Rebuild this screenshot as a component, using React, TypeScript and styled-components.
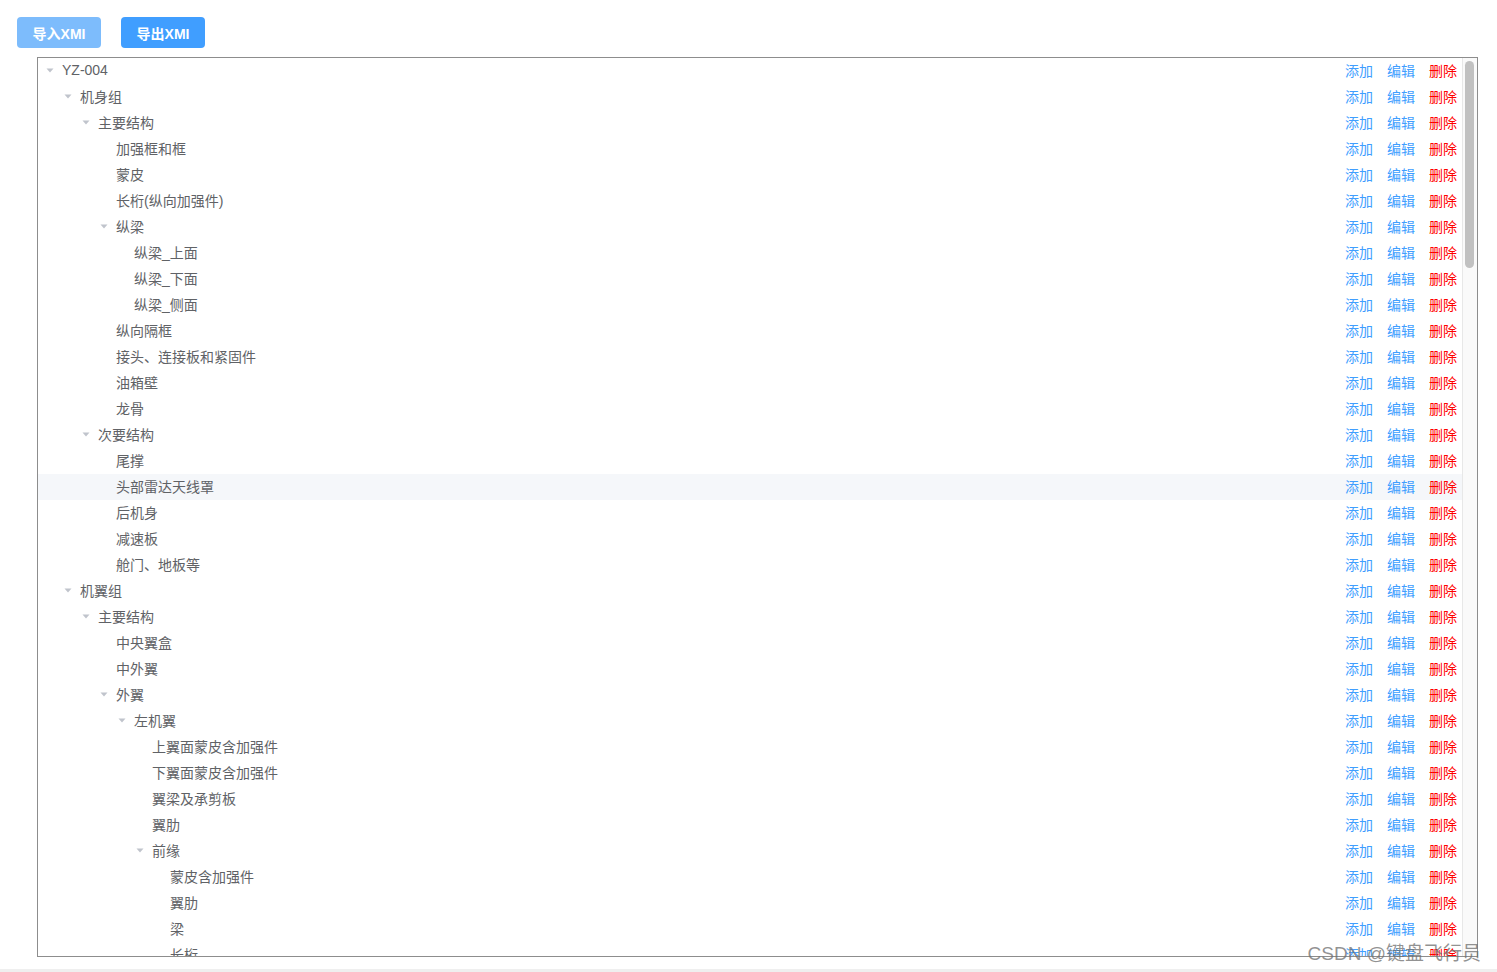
import styled, { createGlobalStyle } from 'styled-components';

interface TreeNode {
  label: string;
  children?: TreeNode[];
}

interface FlatRow {
  label: string;
  level: number;
  hasChildren: boolean;
}

const GlobalStyle = createGlobalStyle`
  html, body {
    margin: 0;
    padding: 0;
    background: #ffffff;
  }
  body {
    font-family: "Liberation Sans", "Noto Sans CJK SC", sans-serif;
    -webkit-font-smoothing: antialiased;
  }
`;

const Page = styled.div`
  position: relative;
  display: flex;
  flex-direction: column;
  width: 1497px;
  height: 972px;
  overflow: hidden;
`;

const Toolbar = styled.div`
  display: flex;
  column-gap: 20px;
  padding: 17px 0 0 17px;
`;

const ToolButton = styled.button<{ $light?: boolean }>`
  width: 84px;
  height: 31px;
  padding: 0;
  border: none;
  border-radius: 4px;
  font-family: "Liberation Sans", "Noto Sans CJK SC", sans-serif;
  font-size: 14px;
  font-weight: 600;
  color: #ffffff;
  background-color: ${(props) => (props.$light ? '#7dbcfc' : '#409eff')};
  cursor: pointer;
`;

const TreePanel = styled.div`
  display: flex;
  box-sizing: border-box;
  height: 900px;
  margin: 9px 19px 0 37px;
  border: 1px solid #8d8d8d;
`;

const ScrollArea = styled.div`
  flex: 1;
  overflow-y: auto;
  overflow-x: hidden;
  scrollbar-width: none;

  &::-webkit-scrollbar {
    display: none;
  }
`;

const ScrollTrack = styled.div`
  display: flex;
  flex-direction: column;
  box-sizing: border-box;
  width: 15px;
  flex-shrink: 0;
  padding: 3px 3px 0 2px;
  background: #fafafa;
  border-left: 1px solid #e8e8e8;
`;

const ScrollThumb = styled.div`
  width: 9px;
  border-radius: 5px;
  background-color: #c1c1c1;
`;

const Row = styled.div<{ $level: number; $active?: boolean }>`
  display: flex;
  align-items: center;
  box-sizing: border-box;
  height: 26px;
  padding: 0 5px 2px ${(props) => props.$level * 18}px;
  background-color: ${(props) => (props.$active ? '#f5f7fa' : 'transparent')};
`;

const ExpandIcon = styled.span`
  display: flex;
  justify-content: center;
  align-items: center;
  width: 24px;
  height: 24px;
  flex-shrink: 0;
`;

const Label = styled.span`
  flex: 1;
  font-size: 14px;
  color: #606266;
  white-space: nowrap;
`;

const Actions = styled.div`
  display: flex;
  align-items: center;
  column-gap: 14px;
`;

const ActionLink = styled.a<{ $danger?: boolean }>`
  font-size: 14px;
  color: ${(props) => (props.$danger ? '#ff0000' : '#409eff')};
  text-decoration: none;
  cursor: pointer;
`;

const BottomBar = styled.div`
  height: 3px;
  margin-top: auto;
  background-color: #efefef;
`;

const Watermark = styled.div`
  position: absolute;
  right: 16px;
  bottom: 6px;
  font-family: "Liberation Sans", "Noto Sans CJK SC", sans-serif;
  font-size: 19px;
  line-height: 24px;
  color: rgba(110, 110, 110, 0.75);
  pointer-events: none;
`;

const n = (label: string, children?: TreeNode[]): TreeNode => ({ label, children });
const leaves = (...labels: string[]) => labels.map((l) => n(l));

// 左右机翼结构相同
const wing = (name: string) =>
  n(name, [
    ...leaves('上翼面蒙皮含加强件', '下翼面蒙皮含加强件', '翼梁及承剪板', '翼肋'),
    n('前缘', leaves('蒙皮含加强件', '翼肋', '梁', '长桁')),
    n('后缘', leaves('蒙皮含加强件', '翼肋', '梁', '长桁')),
    n('翼尖'),
    n('副翼', leaves('蒙皮', '翼肋', '梁', '铰链接头')),
    n('襟翼', leaves('蒙皮', '翼肋', '梁', '滑轨')),
    n('扰流板'),
  ]);

const treeData: TreeNode[] = [
  n('YZ-004', [
    n('机身组', [
      n('主要结构', [
        ...leaves('加强框和框', '蒙皮', '长桁(纵向加强件)'),
        n('纵梁', leaves('纵梁_上面', '纵梁_下面', '纵梁_侧面')),
        ...leaves('纵向隔框', '接头、连接板和紧固件', '油箱壁', '龙骨'),
      ]),
      n('次要结构', leaves('尾撑', '头部雷达天线罩', '后机身', '减速板', '舱门、地板等')),
    ]),
    n('机翼组', [
      n('主要结构', [
        ...leaves('中央翼盒', '中外翼'),
        n('外翼', [wing('左机翼'), wing('右机翼')]),
      ]),
      n('次要结构', leaves('整流罩', '翼身整流带', '检修口盖')),
    ]),
    n('尾翼组', [
      n('主要结构', [
        n('垂直安定面', leaves('蒙皮含加强件', '翼梁', '翼肋', '前缘', '接头')),
        n('方向舵', leaves('蒙皮', '翼肋', '梁', '铰链接头')),
        n('水平安定面', leaves('蒙皮含加强件', '翼梁', '翼肋', '前缘', '接头')),
        n('升降舵', leaves('蒙皮', '翼肋', '梁', '铰链接头')),
      ]),
      n('次要结构', leaves('背鳍', '腹鳍', '整流罩')),
    ]),
    n('起落架组', [
      n('主起落架', leaves('支柱', '轮胎', '刹车装置', '收放作动筒', '舱门')),
      n('前起落架', leaves('支柱', '轮胎', '转向机构', '收放作动筒', '舱门')),
    ]),
    n('动力装置组', [
      n('发动机短舱', leaves('整流罩', '吊挂', '防火墙', '安装节')),
      n('进气道', leaves('唇口', '管道')),
      n('尾喷管'),
    ]),
    n('系统组', leaves('燃油系统', '液压系统', '电气系统', '操纵系统', '环控系统', '航电系统')),
    n('设备组', leaves('座椅', '仪表板', '货舱设施', '救生设备')),
    n('任务载荷组', leaves('雷达', '光电吊舱', '挂架')),
  ]),
];

const flatten = (nodes: TreeNode[], level: number, out: FlatRow[]) => {
  nodes.forEach((node) => {
    const hasChildren = !!node.children && node.children.length > 0;
    out.push({ label: node.label, level, hasChildren });
    if (hasChildren) flatten(node.children as TreeNode[], level + 1, out);
  });
  return out;
};

const rows = flatten(treeData, 0, []);
const ACTIVE_ROW = 16;
const ROW_HEIGHT = 26;
const VIEW_HEIGHT = 898;
const thumbHeight = Math.round((VIEW_HEIGHT * VIEW_HEIGHT) / (rows.length * ROW_HEIGHT));

function Caret() {
  return (
    <svg width='8' height='5' viewBox='0 0 8 5'>
      <path d='M0.5 0.5 L7.5 0.5 L4 4.5 Z' fill='#c0c4cc' />
    </svg>
  );
}

function App() {
  return (
    <Page>
      <GlobalStyle />
      <Toolbar>
        <ToolButton $light>导入XMI</ToolButton>
        <ToolButton>导出XMI</ToolButton>
      </Toolbar>
      <TreePanel>
        <ScrollArea>
          {rows.map((row, i) => (
            <Row key={i} $level={row.level} $active={i === ACTIVE_ROW}>
              <ExpandIcon>{row.hasChildren && <Caret />}</ExpandIcon>
              <Label>{row.label}</Label>
              <Actions>
                <ActionLink>添加</ActionLink>
                <ActionLink>编辑</ActionLink>
                <ActionLink $danger>删除</ActionLink>
              </Actions>
            </Row>
          ))}
        </ScrollArea>
        <ScrollTrack>
          <ScrollThumb style={{ height: thumbHeight }} />
        </ScrollTrack>
      </TreePanel>
      <BottomBar />
      <Watermark>CSDN @键盘飞行员</Watermark>
    </Page>
  );
}

export default App;
